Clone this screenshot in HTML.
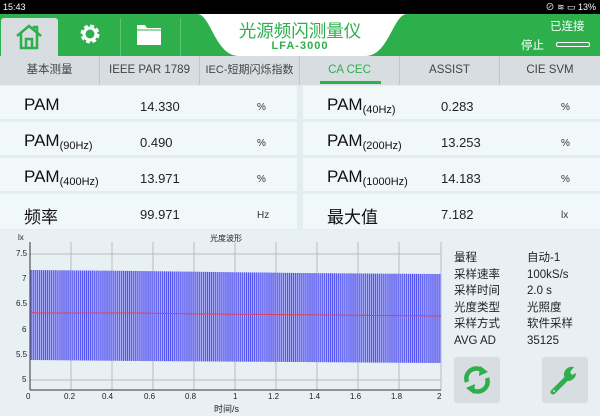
<!DOCTYPE html><html><head><meta charset="utf-8"><style>
*{margin:0;padding:0;box-sizing:border-box}
body{width:600px;height:416px;overflow:hidden;font-family:"Liberation Sans","Noto Sans CJK SC",sans-serif;background:#e8f0f4;position:relative}
.a{position:absolute}
.tab{position:absolute;top:56px;width:100px;height:29px;font-size:11.5px;color:#444;text-align:center;line-height:29px;border-right:1px solid #bfc6c9}
.row{position:absolute;height:35px;border-bottom:2px solid #e3ecef;background:#f1f8fa}
.l{position:absolute;font-size:17px;color:#111;top:9px}
.l sub{font-size:11px;vertical-align:-3px}
.v{position:absolute;font-size:13px;color:#222;top:13px}
.u{position:absolute;font-size:10px;color:#333;top:16px}
.info{position:absolute;font-size:11.5px;color:#222;line-height:16.5px}
.ax{position:absolute;font-size:8px;color:#222}
</style></head><body>
<div class="a" style="left:0;top:0;width:600px;height:14px;background:#000;color:#fff;font-size:9px;line-height:14px;padding-left:3px">15:43<span style="position:absolute;right:4px">⊘ ≋ ▭ 13%</span></div>
<div class="a" style="left:0;top:14px;width:600px;height:42px;background:#2db04c"></div>
<div class="a" style="left:1px;top:18px;width:57px;height:38px;background:#d7dde0;border-radius:3px 3px 0 0"></div>
<svg class="a" style="left:14px;top:24px" width="30" height="26" viewBox="0 0 30 26"><path d="M3 12 L15 2 L27 12 M7 9 V24 H23 V9 M12 24 V15 H18 V24 M20 5 V3 H23 V8" fill="none" stroke="#2db04c" stroke-width="2.5"/></svg>
<div class="a" style="left:120px;top:18px;width:1px;height:38px;background:#5cc474"></div>
<div class="a" style="left:180px;top:18px;width:1px;height:38px;background:#5cc474"></div>
<svg class="a" style="left:78px;top:22px" width="24" height="24" viewBox="0 0 24 24"><circle cx="12" cy="12" r="7" fill="none" stroke="#fff" stroke-width="5" stroke-dasharray="3.3 2.2"/><circle cx="12" cy="12" r="6" fill="none" stroke="#fff" stroke-width="3"/></svg>
<svg class="a" style="left:136px;top:23px" width="26" height="23" viewBox="0 0 26 23"><path d="M1 2 H9 L11 5 H25 V22 H1 Z" fill="#fff"/><path d="M1 7 H25" stroke="#2db04c" stroke-width="1"/></svg>
<svg class="a" style="left:197px;top:14px" width="210" height="44" viewBox="0 0 210 44"><path d="M0 0 C14 0 18 42 42 42 H168 C192 42 196 0 210 0 Z" fill="#fff"/></svg>
<div class="a" style="left:200px;top:20px;width:200px;text-align:center;font-size:17.5px;color:#2db04c;line-height:22px">光源频闪测量仪</div>
<div class="a" style="left:200px;top:40px;width:200px;text-align:center;font-size:11px;color:#2db04c;font-weight:bold;letter-spacing:1px">LFA-3000</div>
<div class="a" style="left:550px;top:18px;font-size:11.5px;color:#fff">已连接</div>
<div class="a" style="left:521px;top:37px;font-size:11.5px;color:#fff">停止</div>
<div class="a" style="left:556px;top:42px;width:34px;height:5px;border:1px solid #fff;border-radius:2px"></div>
<div class="a" style="left:0;top:56px;width:600px;height:29px;background:#d7dde0"></div>
<div class="tab" style="left:0">基本测量</div>
<div class="tab" style="left:100px">IEEE PAR 1789</div>
<div class="tab" style="left:200px;font-size:11px">IEC-短期闪烁指数</div>
<div class="tab" style="left:300px;color:#2db04c">CA CEC</div>
<div class="tab" style="left:400px">ASSIST</div>
<div class="tab" style="left:500px;border:none">CIE SVM</div>
<div class="a" style="left:320px;top:81px;width:61px;height:3px;background:#2db04c"></div>
<div class="a" style="left:0;top:85px;width:600px;height:145px;background:#e3ecef"></div>
<div class="row" style="left:0;top:86px;width:297px"><span class="l" style="left:24px">PAM</span><span class="v" style="left:140px">14.330</span><span class="u" style="left:257px">%</span></div>
<div class="row" style="left:0;top:122px;width:297px"><span class="l" style="left:24px">PAM<sub>(90Hz)</sub></span><span class="v" style="left:140px">0.490</span><span class="u" style="left:257px">%</span></div>
<div class="row" style="left:0;top:158px;width:297px"><span class="l" style="left:24px">PAM<sub>(400Hz)</sub></span><span class="v" style="left:140px">13.971</span><span class="u" style="left:257px">%</span></div>
<div class="row" style="left:0;top:194px;width:297px;border:none"><span class="l" style="left:24px">频率</span><span class="v" style="left:140px">99.971</span><span class="u" style="left:257px">Hz</span></div>
<div class="row" style="left:303px;top:86px;width:297px"><span class="l" style="left:24px">PAM<sub>(40Hz)</sub></span><span class="v" style="left:138px">0.283</span><span class="u" style="left:258px">%</span></div>
<div class="row" style="left:303px;top:122px;width:297px"><span class="l" style="left:24px">PAM<sub>(200Hz)</sub></span><span class="v" style="left:138px">13.253</span><span class="u" style="left:258px">%</span></div>
<div class="row" style="left:303px;top:158px;width:297px"><span class="l" style="left:24px">PAM<sub>(1000Hz)</sub></span><span class="v" style="left:138px">14.183</span><span class="u" style="left:258px">%</span></div>
<div class="row" style="left:303px;top:194px;width:297px;border:none"><span class="l" style="left:24px">最大值</span><span class="v" style="left:138px">7.182</span><span class="u" style="left:258px">lx</span></div>
<svg class="a" style="left:0;top:230px" width="450" height="186">
<defs><pattern id="p" width="2.05" height="10" patternUnits="userSpaceOnUse"><rect width="2.05" height="10" fill="#aeb2f6"/><rect width="0.9" height="10" fill="#4646f0"/></pattern></defs>
<g stroke="#bbb" stroke-width="1">
<line x1="30" y1="24" x2="441" y2="24"/><line x1="30" y1="49" x2="441" y2="49"/><line x1="30" y1="74" x2="441" y2="74"/><line x1="30" y1="100" x2="441" y2="100"/><line x1="30" y1="125" x2="441" y2="125"/><line x1="30" y1="150" x2="441" y2="150"/>
<line x1="71" y1="12" x2="71" y2="160"/><line x1="112" y1="12" x2="112" y2="160"/><line x1="153" y1="12" x2="153" y2="160"/><line x1="194" y1="12" x2="194" y2="160"/><line x1="235" y1="12" x2="235" y2="160"/><line x1="276" y1="12" x2="276" y2="160"/><line x1="317" y1="12" x2="317" y2="160"/><line x1="358" y1="12" x2="358" y2="160"/><line x1="399" y1="12" x2="399" y2="160"/><line x1="441" y1="12" x2="441" y2="160"/>
</g>
<path d="M30 40 L140 41 L300 43 L441 44 L441 133 L300 132 L140 131 L30 130 Z" fill="url(#p)"/>
<path d="M30 82 L35 83 L140 83 L200 84 L330 85 L441 86" fill="none" stroke="#e0405a" stroke-width="1"/>
<line x1="30" y1="12" x2="30" y2="160" stroke="#333"/><line x1="30" y1="160" x2="441" y2="160" stroke="#333"/>
</svg>
<div class="ax" style="left:18px;top:233px">lx</div>
<div class="ax" style="left:210px;top:233px">光度波形</div>
<div class="ax" style="left:16px;top:249px">7.5</div><div class="ax" style="left:22px;top:274px">7</div><div class="ax" style="left:16px;top:299px">6.5</div><div class="ax" style="left:22px;top:325px">6</div><div class="ax" style="left:16px;top:350px">5.5</div><div class="ax" style="left:22px;top:375px">5</div>
<div class="ax" style="left:26px;top:392px">0</div><div class="ax" style="left:64px;top:392px">0.2</div><div class="ax" style="left:102px;top:392px">0.4</div><div class="ax" style="left:144px;top:392px">0.6</div><div class="ax" style="left:185px;top:392px">0.8</div><div class="ax" style="left:233px;top:392px">1</div><div class="ax" style="left:268px;top:392px">1.2</div><div class="ax" style="left:309px;top:392px">1.4</div><div class="ax" style="left:350px;top:392px">1.6</div><div class="ax" style="left:391px;top:392px">1.8</div><div class="ax" style="left:437px;top:392px">2</div>
<div class="ax" style="left:214px;top:402px;font-size:9px">时间/s</div>
<div class="info" style="left:454px;top:250px">量程<br>采样速率<br>采样时间<br>光度类型<br>采样方式<br>AVG AD</div>
<div class="info" style="left:527px;top:250px">自动-1<br>100kS/s<br>2.0 s<br>光照度<br>软件采样<br>35125</div>
<div class="a" style="left:454px;top:357px;width:46px;height:46px;background:#d7dde0;border-radius:3px"></div>
<svg class="a" style="left:461px;top:364px" width="32" height="32" viewBox="0 0 32 32"><path d="M6 18 A10 10 0 0 1 22 7" fill="none" stroke="#2db04c" stroke-width="4.5"/><path d="M19 2 L27 8 L18 12 Z" fill="#2db04c"/><path d="M26 14 A10 10 0 0 1 10 25" fill="none" stroke="#2db04c" stroke-width="4.5"/><path d="M13 30 L5 24 L14 20 Z" fill="#2db04c"/></svg>
<div class="a" style="left:542px;top:357px;width:46px;height:46px;background:#d7dde0;border-radius:3px"></div>
<svg class="a" style="left:549px;top:364px" width="32" height="32" viewBox="0 0 32 32"><path d="M4 28 L17 15" stroke="#2db04c" stroke-width="5" stroke-linecap="round"/><path d="M15 12 A8 8 0 0 1 25 3 L21 8 L23 11 L27 9 A8 8 0 0 1 19 17 Z" fill="#2db04c"/><circle cx="5" cy="27" r="1" fill="#d7dde0"/></svg>
</body></html>
